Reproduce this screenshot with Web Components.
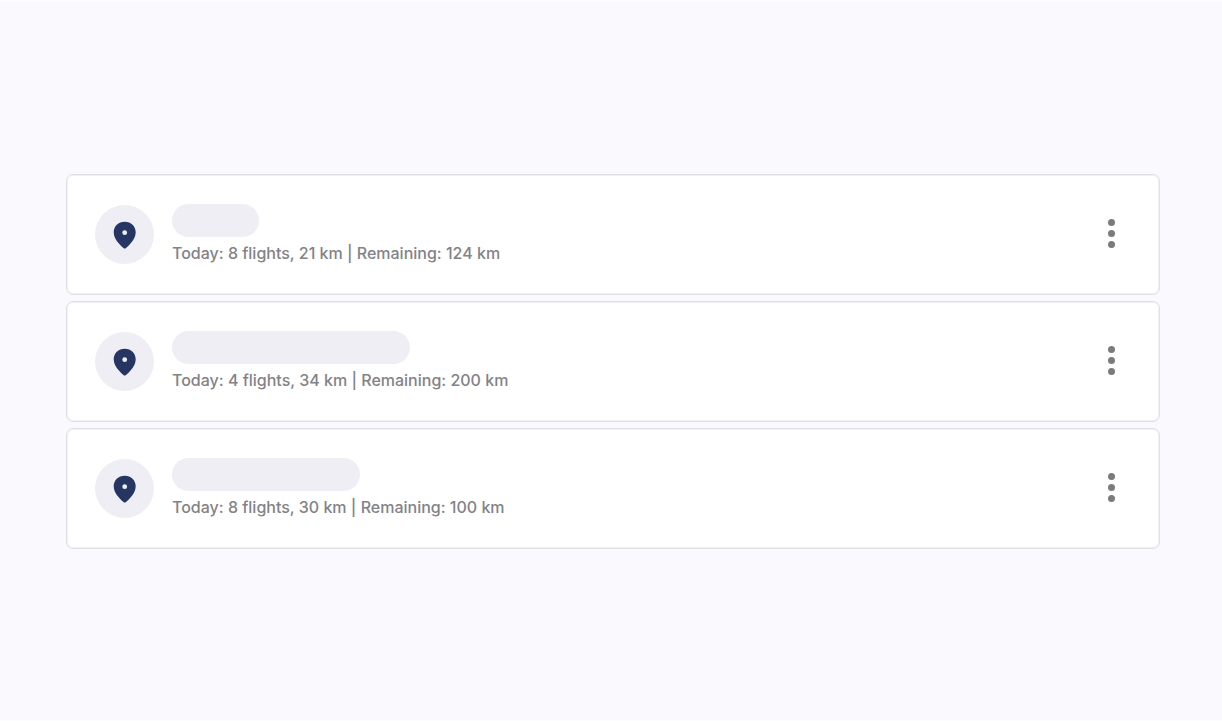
<!DOCTYPE html>
<html lang="en">
<head>
<meta charset="utf-8">
<title>Flights</title>
<style>
body { margin: 0; background: #faf9fe; font-family: Inter, "Noto Sans", sans-serif; }
</style>
</head>
<body>
<flight-list>
  <flight-card style="--name-width: 87px">Today: 8 flights, 21 km | Remaining: 124 km</flight-card>
  <flight-card style="--name-width: 238px">Today: 4 flights, 34 km | Remaining: 200 km</flight-card>
  <flight-card style="--name-width: 188px">Today: 8 flights, 30 km | Remaining: 100 km</flight-card>
</flight-list>

<template id="list-template">
  <style>
    :host {
      display: flex; flex-direction: column; justify-content: center; gap: 6px;
      box-sizing: border-box; min-height: 100vh;
      padding: 1px 62px 0 66px; border: solid #fdfdfe; border-width: 1px 0;
    }
  </style>
  <slot></slot>
</template>

<template id="pin-template">
  <style>
    :host {
      display: grid; place-items: center; flex: none;
      width: 59px; height: 59px; border-radius: 50%; background: #efeef4;
    }
    svg { display: block; }
  </style>
  <svg width="24" height="29" viewBox="0 0 24 29" aria-hidden="true">
    <path fill="#273563" d="M11.700 1.700C5.400 1.700 .7 6.300 .7 12.300c0 4.200 2.200 8 5.200 11.200 1.500 1.700 3 3.200 4.500 4.500.8.7 1.800.7 2.600 0 1.500-1.300 3-2.800 4.500-4.500 3-3.200 5.200-7 5.200-11.200C22.700 6.300 18 1.700 11.700 1.700z"/>
    <circle cx="11.700" cy="12.700" r="2.400" fill="#e3f3f4"/>
  </svg>
</template>

<template id="card-template">
  <style>
    :host {
      display: flex; align-items: center; gap: 18px;
      box-sizing: border-box; min-height: 121px; padding: 0 28px;
      background: #fff; border: 1px solid #e1dfe6; border-radius: 7px;
      box-shadow: inset 0 0 0 1px #f1f0f4;
    }
    .info { flex: 1; min-width: 0; }
    .name { width: var(--name-width); max-width: 100%; height: 33px; border-radius: 17px; background: #efeef4; }
    p { margin: 4px 0 0; font-size: 16px; line-height: 24px; font-weight: 500; color: #838287; }
    button {
      display: grid; place-items: center; flex: none;
      width: 39px; height: 39px; padding: 0; border: 0; background: none; cursor: pointer;
    }
    svg { display: block; }
  </style>
  <location-pin></location-pin>
  <div class="info">
    <div class="name"></div>
    <p><slot></slot></p>
  </div>
  <button type="button" aria-label="More options">
    <svg width="9" height="31" viewBox="0 0 9 31" fill="#7b7b7e" aria-hidden="true">
      <circle cx="4.500" cy="3.500" r="3.500"/><circle cx="4.500" cy="14.500" r="3.500"/><circle cx="4.500" cy="25.500" r="3.500"/>
    </svg>
  </button>
</template>

<script>
const define = (name, templateId) => {
  customElements.define(name, class extends HTMLElement {
    constructor() {
      super();
      this.attachShadow({ mode: "open" })
        .append(document.getElementById(templateId).content.cloneNode(true));
    }
  });
};
define("location-pin", "pin-template");
define("flight-card", "card-template");
define("flight-list", "list-template");
</script>
</body>
</html>
